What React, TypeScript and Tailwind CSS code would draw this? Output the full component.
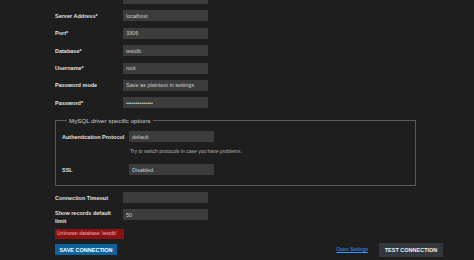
import React from 'react';

const topRows = [
  { label: '', value: '' },
  { label: 'Server Address*', value: 'localhost' },
  { label: 'Port*', value: '3306' },
  { label: 'Database*', value: 'testdb' },
  { label: 'Username*', value: 'root' },
  { label: 'Password mode', value: 'Save as plaintext in settings' },
  { label: 'Password*', value: '••••••••••••••' },
];

function Field({ value, className = '' }: { value: string; className?: string }) {
  return (
    <div
      className={`flex h-[11px] w-[85px] items-center bg-[#3c3c3c] px-[3px] text-[5.5px] text-[#cccccc] ${className}`}
    >
      {value}
    </div>
  );
}

export default function App() {
  return (
    <div className="h-[260px] w-[474px] overflow-hidden bg-[#1e1e1e] font-['Liberation_Sans',Arial,sans-serif] text-[#e0e0e0]">
      <div className="-mt-[7px] flex flex-col gap-[6.4px] pl-[55px]">
        {topRows.map((row, i) => (
          <div key={i} className="flex h-[11px] items-center">
            <div className="w-[68px] text-[5.5px] font-bold">{row.label}</div>
            <Field value={row.value} />
          </div>
        ))}
      </div>

      <fieldset className="mt-[9px] ml-[55px] w-[361px] border border-[#5a5a5a] pb-[10px] pl-[6px] pt-[7px]">
        <legend className="ml-[5px] px-[2px] text-[6.2px] leading-[7px] text-[#d0d0d0]">
          MySQL driver specific options
        </legend>
        <div className="flex h-[11px] items-center">
          <div className="w-[67px] text-[5.5px] font-bold">Authentication Protocol</div>
          <Field value="default" />
        </div>
        <div className="ml-[68px] mt-[6px] h-[7px] text-[5px] leading-[7px] text-[#b0b0b0]">
          Try to switch protocols in case you have problems.
        </div>
        <div className="mt-[9px] flex h-[11px] items-center">
          <div className="w-[67px] text-[5.5px] font-bold">SSL</div>
          <Field value="Disabled" />
        </div>
      </fieldset>

      <div className="mt-[6px] flex flex-col pl-[55px]">
        <div className="flex h-[11px] items-center">
          <div className="w-[68px] text-[5.5px] font-bold">Connection Timeout</div>
          <Field value="" />
        </div>
        <div className="mt-[6px] flex items-start">
          <div className="w-[62px] text-[5.5px] font-bold leading-[8px]">Show records default limit</div>
          <Field value="50" className="ml-[6px]" />
        </div>
        <div className="mt-[4px] flex h-[9.5px] w-[69px] items-center bg-[#8a1212] px-[2px] text-[5px] text-[#f0b4b4]">
          Unknown database &apos;testdb&apos;
        </div>
      </div>

      <div className="mt-[4px] flex items-center justify-between pl-[55px] pr-[31px]">
        <button className="flex h-[11px] w-[62px] items-center justify-center bg-[#0e639c] text-[5.5px] font-bold text-white">
          SAVE CONNECTION
        </button>
        <div className="flex items-center gap-[11px]">
          <a className="text-[5px] text-[#3794ff] underline">Open Settings</a>
          <button className="flex h-[14px] w-[64px] items-center justify-center bg-[#33383e] text-[5.5px] font-bold text-[#f0f0f0]">
            TEST CONNECTION
          </button>
        </div>
      </div>
    </div>
  );
}
